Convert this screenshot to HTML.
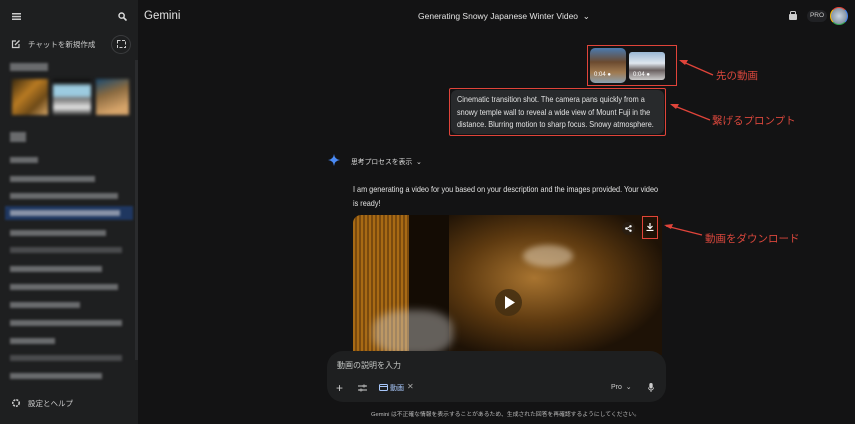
<!DOCTYPE html>
<html><head><meta charset="utf-8"><style>
*{margin:0;padding:0;box-sizing:border-box}
body{width:855px;height:424px;background:#131314;font-family:"Liberation Sans","Noto Sans CJK JP",sans-serif;color:#e3e3e3;position:relative;overflow:hidden}
.a{position:absolute}
.sb{left:0;top:0;width:138px;height:424px;background:#1e1f20}
.bl{position:absolute;background:#6a6b6d;filter:blur(1.2px);height:6px}
.red{color:#d9473c;font-family:"Noto Sans CJK JP",sans-serif;font-size:10.5px}
.t{font-size:8.3px;line-height:12.5px;white-space:nowrap;transform:scaleX(0.88);transform-origin:0 0}
</style></head><body>
<div class="a sb">
 <svg class="a" style="left:12px;top:13px" width="9" height="7"><rect y="0" width="9" height="1.5" fill="#ccc"/><rect y="2.8" width="9" height="1.5" fill="#ccc"/><rect y="5.5" width="9" height="1.5" fill="#ccc"/></svg>
 <svg class="a" style="left:118px;top:12px" width="9" height="9"><circle cx="3.6" cy="3.6" r="2.6" stroke="#ddd" stroke-width="1.4" fill="none"/><path d="M5.5 5.5L8.5 8.5" stroke="#ddd" stroke-width="1.6"/></svg>
 <svg class="a" style="left:11px;top:39px" width="10" height="10"><path d="M8 5v3.5H1.5V2H5" stroke="#ccc" stroke-width="1.2" fill="none"/><path d="M4 6l4.5-4.5" stroke="#ccc" stroke-width="1.3"/></svg>
 <div class="a" style="left:28px;top:39px;font-size:7.5px;color:#ccc">チャットを新規作成</div>
 <div class="a" style="left:111px;top:35px;width:20px;height:19px;border-radius:50%;border:1px solid #3a3b3d"></div>
 <svg class="a" style="left:117px;top:40px" width="9" height="8"><path d="M0.5 0.5h8v7h-8z" stroke="#ccc" stroke-width="1" fill="none" stroke-dasharray="3 1.5"/></svg>
 <div class="bl" style="left:10px;top:63px;width:38px;height:8px"></div>
 <div class="a" style="left:12px;top:79px;width:36px;height:36px;background:linear-gradient(135deg,#3a2a10,#b87a22 40%,#6e4a18 70%,#d8a868);filter:blur(1.5px)"></div>
 <div class="a" style="left:53px;top:79px;width:38px;height:36px;background:linear-gradient(180deg,#111 0 10%,#9ccbe0 20%,#9ccbe0 45%,#777 55%,#e8e8e8 80%,#333);filter:blur(1.5px)"></div>
 <div class="a" style="left:96px;top:79px;width:33px;height:36px;background:linear-gradient(160deg,#1a4a70,#8a6a40 40%,#d6a46a 80%);filter:blur(1.5px)"></div>
 <div class="bl" style="left:10px;top:132px;width:16px;height:10px"></div>
 <div class="bl" style="left:10px;top:157px;width:28px"></div>
 <div class="bl" style="left:10px;top:176px;width:85px"></div>
 <div class="a" style="left:5px;top:206px;width:128px;height:14px;background:#1f3760;filter:blur(1px)"></div>
 <div class="bl" style="left:10px;top:210px;width:110px;background:#8a94a8"></div>
 <div class="bl" style="left:10px;top:193px;width:108px"></div>
 <div class="bl" style="left:10px;top:230px;width:96px"></div>
 <div class="bl" style="left:10px;top:247px;width:112px;background:#4a4b4d"></div>
 <div class="bl" style="left:10px;top:266px;width:92px"></div>
 <div class="bl" style="left:10px;top:284px;width:108px"></div>
 <div class="bl" style="left:10px;top:302px;width:70px"></div>
 <div class="bl" style="left:10px;top:320px;width:112px"></div>
 <div class="bl" style="left:10px;top:338px;width:45px"></div>
 <div class="bl" style="left:10px;top:355px;width:112px;background:#4a4b4d"></div>
 <div class="bl" style="left:10px;top:373px;width:92px"></div>
 <svg class="a" style="left:11px;top:398px" width="10" height="10"><circle cx="5" cy="5" r="3.2" stroke="#ccc" stroke-width="1.6" fill="none" stroke-dasharray="2 1"/></svg>
 <div class="a" style="left:28px;top:398px;font-size:7.5px;color:#ccc">設定とヘルプ</div>
 <div class="a" style="left:135px;top:60px;width:3px;height:300px;background:#2a2b2d"></div>
</div>
<div class="a" style="left:144px;top:10px;font-size:11.5px;color:#e3e3e3">Gemini</div>
<div class="a" style="left:418px;top:11px;font-size:8.5px;color:#e3e3e3">Generating Snowy Japanese Winter Video &nbsp;⌄</div>
<svg class="a" style="left:788px;top:11px" width="10" height="10"><rect x="1" y="3" width="8" height="6" rx="1" fill="#ccc"/><rect x="2.5" y="0.5" width="5" height="3" rx="1" fill="none" stroke="#ccc"/></svg>
<div class="a" style="left:807px;top:10px;width:20px;height:12px;border-radius:6px;background:#202124;font-size:6.5px;color:#ccc;text-align:center;line-height:12px">PRO</div>
<div class="a" style="left:830px;top:7px;width:18px;height:18px;border-radius:50%;border:1.5px solid #4285f4;border-left-color:#fbbc04;border-bottom-color:#34a853;border-top-color:#ea4335;background:radial-gradient(#c8d4e0,#6a7a8a)"></div>

<div class="a" style="left:587px;top:45px;width:90px;height:41px;border:1.5px solid #e0443a"></div>
<div class="a" style="left:590px;top:48px;width:36px;height:35px;border-radius:5px;background:linear-gradient(180deg,#4a7ab0,#6b4a30 40%,#a07a50 70%,#8aa0b0)"></div>
<div class="a" style="left:629px;top:52px;width:36px;height:28px;border-radius:3px;background:linear-gradient(180deg,#9ab8d4,#dfe6ee 40%,#6a6060 65%,#ccc)"></div>
<div class="a" style="left:594px;top:72px;font-size:6px;color:#fff">0:04 ●</div>
<div class="a" style="left:633px;top:72px;font-size:6px;color:#fff">0:04 ●</div>

<div class="a" style="left:449px;top:88px;width:217px;height:48px;border:1.5px solid #e0443a;border-radius:2px"></div>
<div class="a" style="left:451px;top:90px;width:213px;height:44px;background:#282a2c;border-radius:6px"></div>
<div class="a t" style="left:457px;top:93px;color:#e3e3e3">Cinematic transition shot. The camera pans quickly from a<br>snowy temple wall to reveal a wide view of Mount Fuji in the<br>distance. Blurring motion to sharp focus. Snowy atmosphere.</div>

<svg class="a" style="left:677px;top:56px;width:40px;height:22px"><path d="M36 19L4 5" stroke="#e0443a" stroke-width="1.3"/><path d="M2 4l9 0-3 5z" fill="#e0443a"/></svg>
<div class="a red" style="left:716px;top:68px">先の動画</div>
<svg class="a" style="left:668px;top:101px;width:44px;height:22px"><path d="M42 19L4 4" stroke="#e0443a" stroke-width="1.3"/><path d="M2 3l9 0-3 5z" fill="#e0443a"/></svg>
<div class="a red" style="left:712px;top:113px">繋げるプロンプト</div>
<svg class="a" style="left:662px;top:222px;width:42px;height:16px"><path d="M40 13L4 4" stroke="#e0443a" stroke-width="1.3"/><path d="M2 3l9 -1-2 5z" fill="#e0443a"/></svg>
<div class="a red" style="left:705px;top:231px">動画をダウンロード</div>

<svg class="a" style="left:328px;top:154px" width="12" height="12"><path d="M6 0Q6.6 5.4 12 6Q6.6 6.6 6 12Q5.4 6.6 0 6Q5.4 5.4 6 0z" fill="#4a8af4"/></svg>
<div class="a" style="left:351px;top:156px;font-size:6.8px;color:#ddd">思考プロセスを表示 &nbsp;⌄</div>
<div class="a" style="left:353px;top:182px;font-size:8.3px;line-height:14px;color:#e3e3e3;white-space:nowrap;transform:scaleX(0.876);transform-origin:0 0">I am generating a video for you based on your description and the images provided. Your video<br>is ready!</div>

<div class="a" style="left:353px;top:215px;width:309px;height:140px;border-radius:8px 8px 0 0;overflow:hidden;background:#140d05">
 <div class="a" style="left:0;top:0;width:56px;height:140px;background:repeating-linear-gradient(90deg,#a86a14 0 2px,#7a4a0e 2px 4px)"></div>
 <div class="a" style="left:56px;top:0;width:40px;height:140px;background:#140c04"></div>
 <div class="a" style="left:96px;top:0;width:213px;height:140px;background:radial-gradient(ellipse at 40% 45%,#a87430,#5e3a10 40%,#1e1206 75%)"></div>
 <div class="a" style="left:170px;top:30px;width:50px;height:22px;border-radius:50%;background:#e8d8c0;opacity:.5;filter:blur(3px)"></div>
 <div class="a" style="left:20px;top:95px;width:80px;height:45px;border-radius:40%;background:#ddd;opacity:.4;filter:blur(4px)"></div>
</div>
<div class="a" style="left:495px;top:289px;width:27px;height:27px;border-radius:50%;background:rgba(70,48,18,.9)"></div>
<svg class="a" style="left:504px;top:296px" width="11" height="13"><path d="M1 0L11 6.5L1 13z" fill="#fff"/></svg>
<div class="a" style="left:622px;top:222px;width:13px;height:13px;border-radius:50%;background:rgba(40,30,20,.8)"></div>
<svg class="a" style="left:625px;top:225px" width="7" height="7"><circle cx="5.5" cy="1.3" r="1.2" fill="#fff"/><circle cx="1.3" cy="3.5" r="1.2" fill="#fff"/><circle cx="5.5" cy="5.7" r="1.2" fill="#fff"/><path d="M5.5 1.3L1.3 3.5L5.5 5.7" stroke="#fff" stroke-width=".8" fill="none"/></svg>
<div class="a" style="left:642px;top:216px;width:16px;height:23px;border:1.5px solid #e0443a"></div>
<svg class="a" style="left:646px;top:223px" width="8" height="8"><path d="M4 0v5M1.5 3l2.5 2.5L6.5 3M0.5 7.5h7" stroke="#fff" stroke-width="1.2" fill="none"/></svg>

<div class="a" style="left:327px;top:351px;width:339px;height:51px;background:#1e1f20;border-radius:16px"></div>
<div class="a" style="left:337px;top:360px;font-size:8px;color:#c4c7c5">動画の説明を入力</div>
<div class="a" style="left:336px;top:381px;font-size:12px;color:#ccc">+</div>
<svg class="a" style="left:358px;top:384px" width="9" height="8"><path d="M0 2h5M7 2h2M0 6h2M4 6h5" stroke="#ccc" stroke-width="1"/><circle cx="6" cy="2" r="1" fill="none" stroke="#ccc" stroke-width=".8"/><circle cx="3" cy="6" r="1" fill="none" stroke="#ccc" stroke-width=".8"/></svg>
<svg class="a" style="left:379px;top:384px" width="9" height="7"><rect x=".5" y=".5" width="8" height="6" rx="1" fill="none" stroke="#a8c7fa"/><path d="M.5 2.5h8" stroke="#a8c7fa"/></svg>
<div class="a" style="left:390px;top:383px;font-size:7px;color:#a8c7fa">動画</div>
<div class="a" style="left:407px;top:382px;font-size:8px;color:#aaa">✕</div>
<div class="a" style="left:611px;top:383px;font-size:7px;color:#ccc">Pro &nbsp;⌄</div>
<svg class="a" style="left:648px;top:383px" width="6" height="9"><rect x="1.3" y="0" width="3.4" height="5.5" rx="1.7" fill="#ccc"/><path d="M.5 4.5a2.5 2.5 0 005 0M3 7v2" stroke="#ccc" stroke-width=".9" fill="none"/></svg>
<div class="a" style="left:371px;top:409px;font-size:5.8px;color:#bbb">Gemini は不正確な情報を表示することがあるため、生成された回答を再確認するようにしてください。</div>
</body></html>
